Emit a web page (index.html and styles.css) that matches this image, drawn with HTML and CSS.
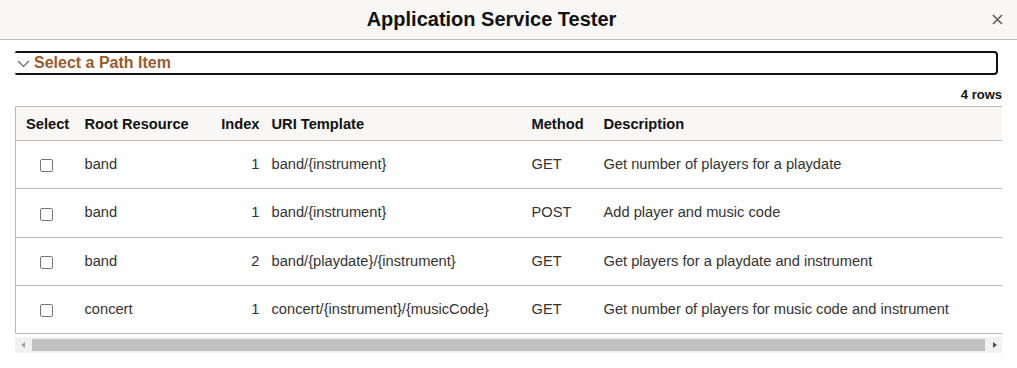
FILE: index.html
```html
<!DOCTYPE html>
<html>
<head>
<meta charset="utf-8">
<link rel="stylesheet" href="styles.css">
</head>
<body>
<div class="dialog">
  <header class="dlg-header">
    <h1 class="dlg-title">Application Service Tester</h1>
    <button class="dlg-close" aria-label="Close">
      <svg width="11" height="11" viewBox="0 0 11 11"><path d="M1 1L10 10M10 1L1 10" stroke="#5a5a5a" stroke-width="1.5" fill="none"/></svg>
    </button>
  </header>
  <main class="dlg-body">
    <div class="section-head">
      <svg class="chev" width="13" height="8" viewBox="0 0 13 8"><path d="M1 1L6.5 6.5L12 1" stroke="#666" stroke-width="1.2" fill="none"/></svg>
      <span class="section-title">Select a Path Item</span>
    </div>
    <div class="row-count">4 rows</div>
    <div class="grid-wrap">
      <table class="grid">
        <colgroup>
          <col class="c-sel"><col class="c-root"><col class="c-idx"><col class="c-uri"><col class="c-meth"><col class="c-desc">
        </colgroup>
        <thead>
          <tr><th class="sel">Select</th><th>Root Resource</th><th class="num">Index</th><th>URI Template</th><th>Method</th><th>Description</th></tr>
        </thead>
        <tbody>
          <tr><td class="ctr"><span class="cb"></span></td><td>band</td><td class="num">1</td><td>band/{instrument}</td><td>GET</td><td>Get number of players for a playdate</td></tr>
          <tr><td class="ctr"><span class="cb"></span></td><td>band</td><td class="num">1</td><td>band/{instrument}</td><td>POST</td><td>Add player and music code</td></tr>
          <tr><td class="ctr"><span class="cb"></span></td><td>band</td><td class="num">2</td><td>band/{playdate}/{instrument}</td><td>GET</td><td>Get players for a playdate and instrument</td></tr>
          <tr><td class="ctr"><span class="cb"></span></td><td>concert</td><td class="num">1</td><td>concert/{instrument}/{musicCode}</td><td>GET</td><td>Get number of players for music code and instrument</td></tr>
        </tbody>
      </table>
    </div>
    <div class="hscroll">
      <span class="arrow left"></span>
      <span class="thumb"></span>
      <span class="arrow right"></span>
    </div>
  </main>
</div>
</body>
</html>
```
FILE: styles.css
```css
* { box-sizing: border-box; }
html, body { margin: 0; padding: 0; background: #fff; }
body { font-family: "Liberation Sans", Arial, sans-serif; color: #333; width: 1017px; height: 368px; overflow: hidden; }

.dlg-header {
  display: flex;
  align-items: center;
  height: 40px;
  background: #f8f7f5;
  border-bottom: 1px solid #bfbcb8;
}
.dlg-title {
  flex: 1;
  margin: 0;
  text-align: center;
  font-size: 20px;
  font-weight: bold;
  color: #111;
  line-height: 39px;
}
.dlg-close {
  width: 28px;
  margin-right: 6px;
  height: 39px;
  padding: 0;
  border: 0;
  background: transparent;
  display: flex;
  align-items: center;
  justify-content: center;
}

.dlg-body { padding: 0 15px; }

.section-head {
  margin-top: 11px;
  margin-right: 4px;
  height: 24px;
  border-top: 2px solid #111;
  border-bottom: 2px solid #111;
  border-right: 2px solid #111;
  border-radius: 2px 4px 4px 2px;
  display: flex;
  align-items: center;
  padding-left: 2px;
}
.chev { margin-right: 4px; margin-top: 2px; }
.section-title {
  font-size: 16px;
  font-weight: bold;
  color: #9a5a2c;
}

.row-count {
  margin-top: 13px;
  height: 14px;
  line-height: 14px;
  text-align: right;
  font-size: 13px;
  font-weight: bold;
  color: #111;
}

.grid-wrap {
  margin-top: 4px;
  overflow: hidden;
  width: 987px;
}
.grid {
  border-collapse: collapse;
  table-layout: fixed;
  width: 1060px;
  font-size: 14.67px;
}
.c-sel { width: 61px; }
.c-root { width: 136px; }
.c-idx { width: 51px; }
.c-uri { width: 260px; }
.c-meth { width: 72px; }
.c-desc { width: 480px; }

.grid thead th {
  background: #f8f7f5;
  height: 34px;
  font-weight: bold;
  color: #111;
  text-align: left;
  padding: 0 8px;
  border-top: 1px solid #bfbcb8;
  border-bottom: 1px solid #bfbcb8;
  white-space: nowrap;
}
.grid th:first-child, .grid td:first-child { border-left: 1px solid #bfbcb8; }
.grid th.sel { padding-left: 10px; }
.grid td {
  height: 48.25px;
  padding: 0 8px 1px;
  border-bottom: 1px solid #bfbcb8;
  white-space: nowrap;
  color: #333;
}
.grid .num { text-align: right; padding-right: 4px; }
.grid td.ctr { text-align: center; padding: 0 0 0 1px; }
.cb {
  display: inline-block;
  width: 13px;
  height: 13px;
  border: 1px solid #767676;
  border-radius: 2px;
  vertical-align: middle;
  background: #fff;
}

.hscroll {
  margin-top: 3px;
  height: 16px;
  width: 987px;
  background: #f1f1f1;
  display: flex;
  align-items: center;
}
.thumb {
  height: 12px;
  background: #c1c1c1;
  flex: 1;
  margin: 0 2px;
}
.arrow { width: 15px; height: 16px; position: relative; flex: none; }
.arrow.left::before, .arrow.right::before {
  content: "";
  position: absolute;
  top: 5px;
  border-top: 3px solid transparent;
  border-bottom: 3px solid transparent;
}
.arrow.left::before { left: 6px; border-right: 4px solid #a3a3a3; }
.arrow.right::before { left: 6px; border-left: 4px solid #505050; }
```
